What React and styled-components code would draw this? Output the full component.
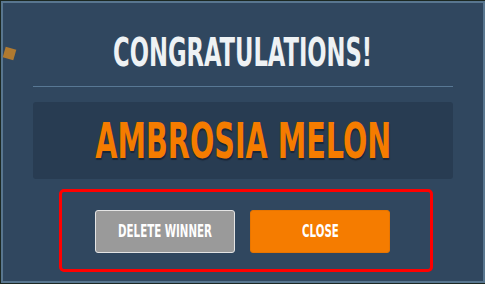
import React from "react";
import styled, { createGlobalStyle } from "styled-components";

const GlobalStyle = createGlobalStyle`
    html, body {
        margin: 0;
        padding: 0;
        background: #1b2822;
    }
    body {
        font-family: "DejaVu Sans Condensed", "DejaVu Sans", sans-serif;
    }
`;

const Overlay = styled.div`
    width: 485px;
    height: 284px;
    box-sizing: border-box;
    padding: 1px 0 1px 1px;
    position: relative;
    overflow: hidden;
`;

const Modal = styled.div`
    height: 100%;
    box-sizing: border-box;
    background: #30475f;
    border: 2px solid #58768f;
    padding: 30px 30px 0 30px;
    display: flex;
    flex-direction: column;
`;

const Confetti = styled.div`
    position: absolute;
    left: 4px;
    top: 48px;
    width: 11px;
    height: 11px;
    background: #b07a30;
    transform: rotate(16deg);
`;

const Squeeze = styled.span`
    display: inline-block;
    flex: none;
    white-space: nowrap;
    transform: scaleX(${p => p.$x});
`;

const Title = styled.h1`
    margin: 0;
    font-size: 39px;
    line-height: 39px;
    font-weight: 700;
    color: #eef2f4;
    display: flex;
    justify-content: center;
`;

const Divider = styled.hr`
    margin: 14px 0 0 0;
    border: none;
    height: 1px;
    background: #587894;
`;

const WinnerBox = styled.div`
    margin-top: 15px;
    background: #283c52;
    border-radius: 3px;
    padding: 14px 0 13px;
    display: flex;
    justify-content: center;
`;

const WinnerName = styled.div`
    font-size: 50px;
    line-height: 50px;
    font-weight: 700;
    color: #f57c00;
    text-shadow: 1px 2px 1px #1a2637;
    display: flex;
    justify-content: center;
    width: 100%;
`;

const Actions = styled.div`
    margin: 10px 20px 0 26px;
    border: 3px solid #ff0000;
    border-radius: 5px;
    padding: 18px 7px 16px 0;
    display: flex;
    justify-content: center;
    gap: 15px;
`;

const Button = styled.button`
    width: 140px;
    height: 43px;
    flex: none;
    box-sizing: border-box;
    border-radius: 3px;
    border: 1px solid ${p => p.$primary ? "#e87500" : "#e4e4e4"};
    background: ${p => p.$primary ? "#f57c00" : "#9a9a9a"};
    color: #ffffff;
    font-family: inherit;
    font-size: 17px;
    line-height: 17px;
    font-weight: 700;
    display: flex;
    align-items: center;
    justify-content: center;
    padding: 0;
    overflow: visible;
`;

function App(){
    return(
        <>
            <GlobalStyle />
            <Overlay>
                <Modal>
                    <Title><Squeeze $x={0.646}>CONGRATULATIONS!</Squeeze></Title>
                    <Divider />
                    <WinnerBox>
                        <WinnerName><Squeeze $x={0.637}>AMBROSIA MELON</Squeeze></WinnerName>
                    </WinnerBox>
                    <Actions>
                        <Button><Squeeze $x={0.67}>DELETE WINNER</Squeeze></Button>
                        <Button $primary><Squeeze $x={0.67}>CLOSE</Squeeze></Button>
                    </Actions>
                </Modal>
                <Confetti />
            </Overlay>
        </>
    )
}
export default App;
